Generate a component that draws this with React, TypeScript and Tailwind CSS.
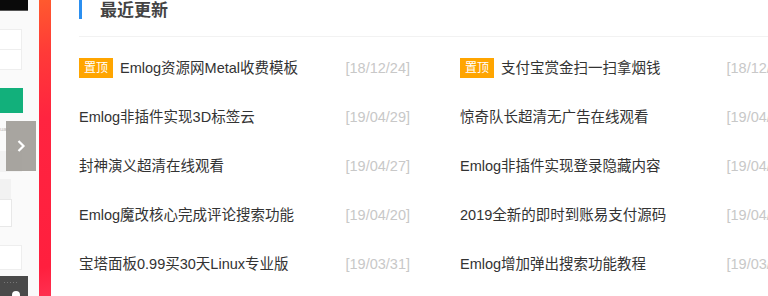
import React from "react";

type Item = { title: string; date: string; top?: boolean };

const col1: Item[] = [
  { title: "Emlog资源网Metal收费模板", date: "[18/12/24]", top: true },
  { title: "Emlog非插件实现3D标签云", date: "[19/04/29]" },
  { title: "封神演义超清在线观看", date: "[19/04/27]" },
  { title: "Emlog魔改核心完成评论搜索功能", date: "[19/04/20]" },
  { title: "宝塔面板0.99买30天Linux专业版", date: "[19/03/31]" },
];

const col2: Item[] = [
  { title: "支付宝赏金扫一扫拿烟钱", date: "[18/12/24]", top: true },
  { title: "惊奇队长超清无广告在线观看", date: "[19/04/29]" },
  { title: "Emlog非插件实现登录隐藏内容", date: "[19/04/27]" },
  { title: "2019全新的即时到账易支付源码", date: "[19/04/20]" },
  { title: "Emlog增加弹出搜索功能教程", date: "[19/03/31]" },
];

function Row({ item }: { item: Item }) {
  return (
    <div className="h-[49px] flex items-center justify-between w-[331px]">
      <div className="flex items-center min-w-0">
        {item.top && (
          <span className="bg-[#ffa500] text-white text-[12px] leading-[20px] h-[20px] px-[5px] mr-[7px] shrink-0">
            置顶
          </span>
        )}
        <span className="text-[14.5px] text-[#333] leading-[20px] whitespace-nowrap">{item.title}</span>
      </div>
      <span className="text-[14.5px] text-[#c8c8c8] leading-[20px] whitespace-nowrap">{item.date}</span>
    </div>
  );
}

export default function App() {
  return (
    <div
      className="w-[768px] h-[296px] overflow-hidden bg-white flex"
      style={{ fontFamily: '"Liberation Sans", Arial, "Noto Sans CJK SC", sans-serif' }}
    >
      {/* left clipped page area */}
      <div className="relative w-[39px] h-full bg-[#fafafa] shrink-0 flex flex-col">
        <div className="w-[28px] h-[11px] bg-[#0a0a0a] border-b border-[#555]" />
        <div className="mt-[18px] w-[22px] h-[41px] bg-white border border-l-0 border-[#eee] flex flex-col">
          <div className="h-[20px] border-b border-[#eee]" />
        </div>
        <div className="mt-[18px] w-[23px] h-[25px] bg-[#12b07b]" />
        <div className="mt-[13px] w-[20px] h-[6px] text-[6px] leading-[6px] text-[#bbb] overflow-hidden">uan</div>
        <div className="mt-[19px] w-[22px] h-[21px] bg-[#f2f2f2]" />
        <div className="mt-[7px] w-[11px] h-[20px] bg-[#f2f2f2]" />
        <div className="w-[12px] h-[28px] bg-white border border-l-0 border-[#e8e8e8]" />
        <div className="mt-[18px] w-[22px] h-[25px] bg-white border border-l-0 border-[#eee]" />
        <div className="relative w-[28px] h-[20px] bg-[#4a4a4a] mt-auto overflow-hidden">
          <div className="absolute left-[4px] top-[6px] flex gap-[2px]">
            <span className="w-[1px] h-[1px] bg-[#777]" />
            <span className="w-[1px] h-[1px] bg-[#777]" />
            <span className="w-[1px] h-[1px] bg-[#777]" />
            <span className="w-[1px] h-[1px] bg-[#777]" />
            <span className="w-[1px] h-[1px] bg-[#777]" />
          </div>
          <div className="absolute left-[12px] top-[15px] w-[8px] h-[8px] rounded-full bg-white" />
        </div>
        <div className="absolute left-[6px] top-[121px] w-[30px] h-[50px] bg-[#9e9b96]/90 flex items-center justify-center">
          <svg width="10" height="14" viewBox="0 0 10 14" fill="none">
            <path d="M2.5 2 L7.5 7 L2.5 12" stroke="white" strokeWidth="2.2" />
          </svg>
        </div>
      </div>

      {/* red strip */}
      <div className="w-[12px] h-full shrink-0 bg-[linear-gradient(170deg,#ff5a2e_0%,#ff3a38_18%,#ff2440_40%,#ff1f3e_90%,#ff3050_100%)]" />

      {/* main */}
      <div className="flex-1 pl-[28px] min-w-0">
        <div className="h-[37px] border-b border-[#f2f2f2]">
          <div className="h-[19px] border-l-[3px] border-[#2b8ff0] pl-[18px] text-[17px] font-bold text-[#444] leading-[18px]"
            style={{ fontFamily: '"Noto Sans CJK SC", sans-serif' }}>
            最近更新
          </div>
        </div>
        <div className="pt-[6px] grid grid-cols-[331px_331px] gap-x-[50px] w-[720px]">
          <div className="flex flex-col">
            {col1.map((it, i) => (
              <Row key={i} item={it} />
            ))}
          </div>
          <div className="flex flex-col">
            {col2.map((it, i) => (
              <Row key={i} item={it} />
            ))}
          </div>
        </div>
      </div>
    </div>
  );
}
